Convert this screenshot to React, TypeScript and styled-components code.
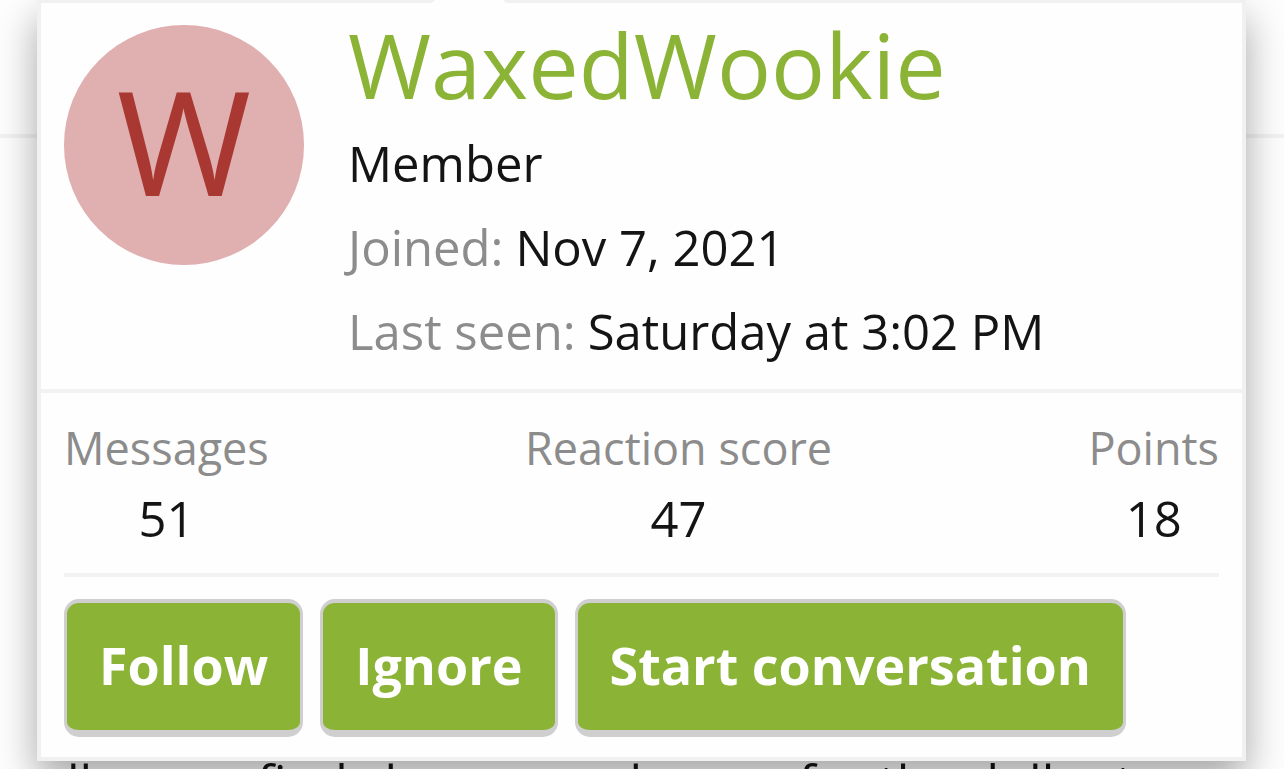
import React from "react";
import styled, { createGlobalStyle } from "styled-components";

const GlobalStyle = createGlobalStyle`
  * { box-sizing: border-box; }
  html, body { margin: 0; background: #fefefe; overflow: hidden; }
  body { font-family: "Open Sans", "Noto Sans", sans-serif; color: #141414; }
`;

const Page = styled.div`
  position: relative;
  height: 100vh;
  overflow: hidden;
  display: flex;
  flex-direction: column;
`;

const PostHeader = styled.header`
  height: 138px;
  flex: none;
  border-bottom: 4px solid #f2f2f2;
`;

const PostText = styled.p`
  margin: 610px 0 0;
  padding: 0 67px;
  font-size: 50px;
  line-height: 68px;
  white-space: nowrap;
`;

const Card = styled.section`
  position: absolute;
  top: -1px;
  left: 37px;
  right: 38px;
  background: #fefefe;
  border: 4px solid #f1f1f1;
  box-shadow: 0 19px 38px rgba(0, 0, 0, 0.35);
`;

const Arrow = styled.span`
  position: absolute;
  top: -4px;
  left: 391px;
  width: 74px;
  height: 4px;
  background: #fefefe;
  clip-path: polygon(4px 0, 70px 0, 100% 100%, 0 100%);
`;

const Profile = styled.div`
  display: flex;
  gap: 44px;
  padding: 22px 23px 16px;
  border-bottom: 4px solid #f2f2f2;
`;

const Avatar = styled.a`
  flex: none;
  width: 240px;
  height: 240px;
  border-radius: 50%;
  background: #e0afaf;
  color: #a93833;
  font-family: "Noto Sans", "Open Sans", sans-serif;
  font-size: 144px;
  line-height: 230px;
  text-align: center;
  text-decoration: none;
`;

const Details = styled.div`
  flex: 1;
  min-width: 0;
`;

const Name = styled.h1`
  margin: 0 0 18px;
  font-size: 90px;
  font-weight: 400;
  line-height: 78px;
`;

const NameLink = styled.a`
  color: #8bb336;
  text-decoration: none;
`;

const Line = styled.div`
  font-size: 49px;
  line-height: 84px;
`;

const Facts = styled.dl`
  margin: 0;
`;

const Fact = styled(Line)`
  display: flex;
  gap: 12px;
`;

const FactLabel = styled.dt`
  color: #8c8c8c;
`;

const FactValue = styled.dd`
  margin: 0;
`;

const Body = styled.div`
  padding: 20px 23px;
`;

const Stats = styled.dl`
  display: flex;
  justify-content: space-between;
  margin: 0;
  padding-bottom: 20px;
  border-bottom: 4px solid #f2f2f2;
  text-align: center;
`;

const StatLabel = styled.dt`
  color: #8c8c8c;
  font-size: 45px;
  line-height: 70px;
`;

const StatValue = styled.dd`
  margin: 0;
  font-size: 49px;
  line-height: 70px;
`;

const Actions = styled.div`
  display: flex;
  gap: 17px;
  padding-top: 22px;
`;

const Button = styled.button`
  height: 138px;
  padding: 0 32px 4px;
  border: solid #cfcfcf;
  border-width: 4px 3px 7px;
  border-radius: 15px;
  background: #8bb336;
  color: #fff;
  font-family: inherit;
  font-size: 52px;
  font-weight: 700;
  white-space: nowrap;
`;

const facts = [
  { label: "Joined:", value: "Nov 7, 2021" },
  { label: "Last seen:", value: "Saturday at 3:02 PM" },
];

const stats = [
  { label: "Messages", value: "51" },
  { label: "Reaction score", value: "47" },
  { label: "Points", value: "18" },
];

const actions = ["Follow", "Ignore", "Start conversation"];

export default function App() {
  return (
    <Page>
      <GlobalStyle />
      <PostHeader />
      <PostText>ll wears find shown one has no for the dollar t</PostText>
      <Card>
        <Arrow />
        <Profile>
          <Avatar href="#">W</Avatar>
          <Details>
            <Name>
              <NameLink href="#">WaxedWookie</NameLink>
            </Name>
            <Line>Member</Line>
            <Facts>
              {facts.map((f) => (
                <Fact key={f.label}>
                  <FactLabel>{f.label}</FactLabel>
                  <FactValue>{f.value}</FactValue>
                </Fact>
              ))}
            </Facts>
          </Details>
        </Profile>
        <Body>
          <Stats>
            {stats.map((s) => (
              <div key={s.label}>
                <StatLabel>{s.label}</StatLabel>
                <StatValue>{s.value}</StatValue>
              </div>
            ))}
          </Stats>
          <Actions>
            {actions.map((a) => (
              <Button key={a} type="button">
                {a}
              </Button>
            ))}
          </Actions>
        </Body>
      </Card>
    </Page>
  );
}
